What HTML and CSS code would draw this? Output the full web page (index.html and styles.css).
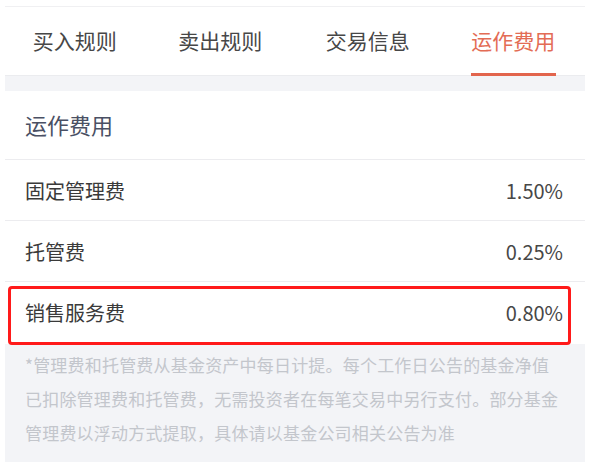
FILE: index.html
```html
<!DOCTYPE html>
<html lang="zh-CN">
<head>
<meta charset="utf-8">
<title>运作费用</title>
<link rel="stylesheet" href="styles.css">
</head>
<body>
<div class="page">
  <nav class="tabs">
    <div class="tab">买入规则</div>
    <div class="tab">卖出规则</div>
    <div class="tab">交易信息</div>
    <div class="tab active">运作费用</div>
  </nav>
  <section class="card">
    <div class="card-title">运作费用</div>
    <div class="row"><span class="label">固定管理费</span><span class="value">1.50%</span></div>
    <div class="row"><span class="label">托管费</span><span class="value">0.25%</span></div>
    <div class="row row-last highlight"><span class="label">销售服务费</span><span class="value">0.80%</span></div>
  </section>
  <p class="note">*管理费和托管费从基金资产中每日计提。每个工作日公告的基金净值<br>已扣除管理费和托管费，无需投资者在每笔交易中另行支付。部分基金<br>管理费以浮动方式提取，具体请以基金公司相关公告为准</p>
</div>
</body>
</html>
```

FILE: styles.css
```css
* { box-sizing: border-box; }
html, body { margin: 0; padding: 0; background: #ffffff; }
body {
  font-family: "Noto Sans CJK SC", "Noto Sans", sans-serif;
  padding-top: 6px;
}
.page {
  margin: 0 6px 0 5px;
  background: #f3f4f7;
}
.tabs {
  display: flex;
  height: 70px;
  background: #ffffff;
  border-top: 1px solid #f0f0f2;
  border-bottom: 1px solid #ebecef;
}
.tab {
  flex: 1;
  display: flex;
  align-items: center;
  justify-content: center;
  font-size: 21px;
  color: #474747;
  position: relative;
  padding-bottom: 2px;
}
.tab:first-child { padding-right: 6px; }
.tab:nth-child(2) { padding-right: 8px; }
.tab:nth-child(3) { padding-right: 6px; }
.tab:nth-child(4) { padding-right: 2px; }
.tab.active { color: #e36c55; }
.tab.active::after {
  content: "";
  position: absolute;
  left: 50%;
  bottom: -1px;
  width: 85px;
  margin-left: -43px;
  height: 3px;
  background: #e2654d;
}
.card {
  margin-top: 15px;
  background: #ffffff;
}
.card-title {
  height: 69px;
  padding: 0 20px;
  display: flex;
  align-items: center;
  font-size: 22px;
  color: #4a5064;
  border-bottom: 1px solid #ececef;
  padding-bottom: 2px;
}
.row {
  height: 61px;
  padding: 0 22px 0 20px;
  display: flex;
  align-items: center;
  justify-content: space-between;
  border-bottom: 1px solid #ececef;
  font-size: 20px;
  color: #3a3a3a;
}
.row .value { color: #474747; }
.row-last {
  height: 62px;
  border-bottom: none;
  padding-bottom: 2px;
}
.highlight { position: relative; }
.highlight::after {
  content: "";
  position: absolute;
  left: 3px;
  right: 14px;
  top: 4px;
  bottom: -1px;
  border: 3px solid #ff1a1a;
  border-radius: 4px;
}
.note {
  margin: 0;
  padding: 4px 20px 12px 20px;
  font-size: 17px;
  line-height: 34px;
  color: #c3c6cc;
  letter-spacing: 0.2px;
  white-space: nowrap;
}
```
